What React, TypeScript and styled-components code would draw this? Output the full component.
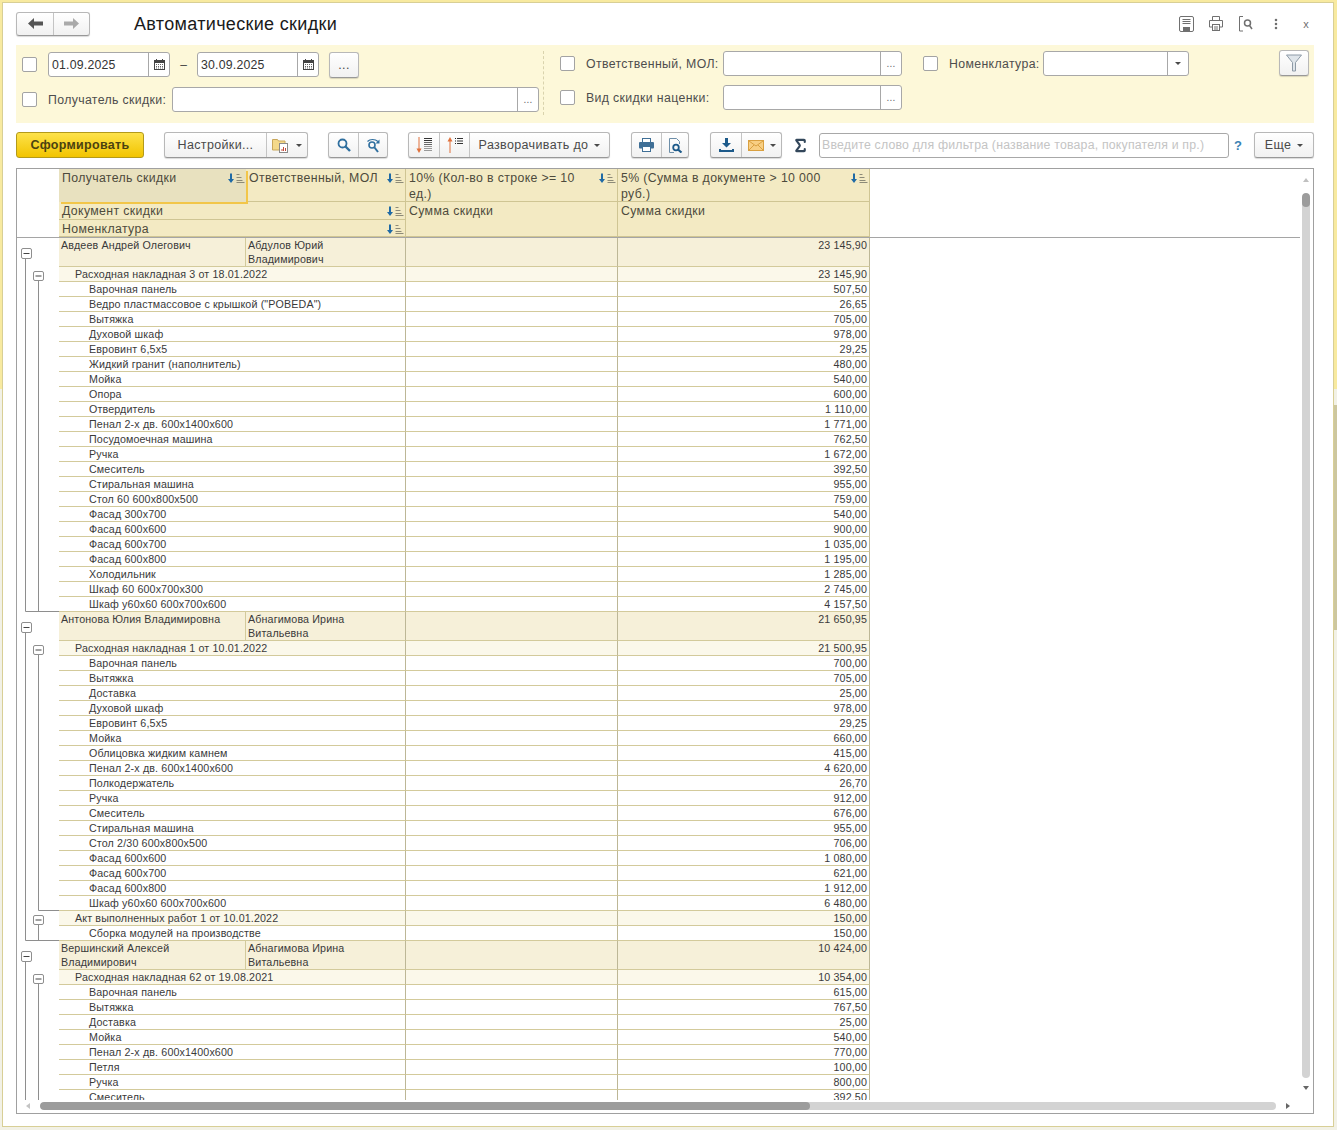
import React from 'react';
import styled, { createGlobalStyle } from 'styled-components';
import { MoreVertical, Sigma } from 'lucide-react';

type Item = [string, string];
type Doc = { title: string; sum: string; items: Item[] };
type Group = { name: string; mol: string; sum: string; docs: Doc[] };

const groups: Group[] = [
  {
    name: 'Авдеев Андрей Олегович',
    mol: 'Абдулов Юрий Владимирович',
    sum: '23 145,90',
    docs: [
      {
        title: 'Расходная накладная 3 от 18.01.2022',
        sum: '23 145,90',
        items: [
          ['Варочная панель', '507,50'],
          ['Ведро пластмассовое с крышкой ("POBEDA")', '26,65'],
          ['Вытяжка', '705,00'],
          ['Духовой шкаф', '978,00'],
          ['Евровинт 6,5х5', '29,25'],
          ['Жидкий гранит (наполнитель)', '480,00'],
          ['Мойка', '540,00'],
          ['Опора', '600,00'],
          ['Отвердитель', '1 110,00'],
          ['Пенал 2-х дв. 600х1400х600', '1 771,00'],
          ['Посудомоечная машина', '762,50'],
          ['Ручка', '1 672,00'],
          ['Смеситель', '392,50'],
          ['Стиральная машина', '955,00'],
          ['Стол 60 600х800х500', '759,00'],
          ['Фасад 300х700', '540,00'],
          ['Фасад 600х600', '900,00'],
          ['Фасад 600х700', '1 035,00'],
          ['Фасад 600х800', '1 195,00'],
          ['Холодильник', '1 285,00'],
          ['Шкаф 60 600х700х300', '2 745,00'],
          ['Шкаф у60х60 600х700х600', '4 157,50'],
        ],
      },
    ],
  },
  {
    name: 'Антонова Юлия Владимировна',
    mol: 'Абнагимова Ирина Витальевна',
    sum: '21 650,95',
    docs: [
      {
        title: 'Расходная накладная 1 от 10.01.2022',
        sum: '21 500,95',
        items: [
          ['Варочная панель', '700,00'],
          ['Вытяжка', '705,00'],
          ['Доставка', '25,00'],
          ['Духовой шкаф', '978,00'],
          ['Евровинт 6,5х5', '29,25'],
          ['Мойка', '660,00'],
          ['Облицовка жидким камнем', '415,00'],
          ['Пенал 2-х дв. 600х1400х600', '4 620,00'],
          ['Полкодержатель', '26,70'],
          ['Ручка', '912,00'],
          ['Смеситель', '676,00'],
          ['Стиральная машина', '955,00'],
          ['Стол 2/30 600х800х500', '706,00'],
          ['Фасад 600х600', '1 080,00'],
          ['Фасад 600х700', '621,00'],
          ['Фасад 600х800', '1 912,00'],
          ['Шкаф у60х60 600х700х600', '6 480,00'],
        ],
      },
      {
        title: 'Акт выполненных работ 1 от 10.01.2022',
        sum: '150,00',
        items: [['Сборка модулей на производстве', '150,00']],
      },
    ],
  },
  {
    name: 'Вершинский Алексей Владимирович',
    mol: 'Абнагимова Ирина Витальевна',
    sum: '10 424,00',
    docs: [
      {
        title: 'Расходная накладная 62 от 19.08.2021',
        sum: '10 354,00',
        items: [
          ['Варочная панель', '615,00'],
          ['Вытяжка', '767,50'],
          ['Доставка', '25,00'],
          ['Мойка', '540,00'],
          ['Пенал 2-х дв. 600х1400х600', '770,00'],
          ['Петля', '100,00'],
          ['Ручка', '800,00'],
          ['Смеситель', '392,50'],
          ['Стол 60 600х800х500', '759,00'],
        ],
      },
    ],
  },
];

const GlobalStyle = createGlobalStyle`
  html, body { margin: 0; padding: 0; }
  body {
    background: #fff;
    font-family: "Liberation Sans", Arial, sans-serif;
  }
`;

const Desktop = styled.div`
  width: 1337px;
  height: 1130px;
  box-sizing: border-box;
  padding: 3px 4px 4px 3px;
  background:
    linear-gradient(#cdc79f, #cdc79f) right 0 top 405px / 3px 225px no-repeat,
    linear-gradient(to bottom, #f8eaa0 0, #f8eaa0 389px, #f2f1e6 389px);
  overflow: hidden;
`;

const Window = styled.div`
  height: 100%;
  box-sizing: border-box;
  background: #fff;
  box-shadow: 0 0 0 1px #d8cf96;
  padding: 8px 19px 12px 13px;
  display: flex;
  flex-direction: column;
`;

const TitleBar = styled.div`
  height: 25px;
  display: flex;
  align-items: center;
  margin-bottom: 9px;
`;

const Title = styled.h1`
  margin: 1px 0 0 44px;
  font-size: 18px;
  font-weight: 400;
  color: #1a1a1a;
  letter-spacing: 0.33px;
`;

const TitleIcons = styled.div`
  margin-left: auto;
  margin-right: -7px;
  display: flex;
  align-items: center;
  color: #6f6f6f;
`;

const TitleIcon = styled.span`
  width: 30px;
  height: 18px;
  display: flex;
  align-items: center;
  justify-content: center;
  font-size: 11px;
`;

const ButtonGroup = styled.div<{ $gap?: number; $h?: number }>`
  display: inline-flex;
  height: ${(p) => p.$h ?? 26}px;
  box-sizing: border-box;
  border: 1px solid #b8b8b8;
  border-bottom-color: #989898;
  border-radius: 3px;
  background: linear-gradient(to bottom, #ffffff, #f1f1f1);
  box-shadow: 0 1px 1px rgba(0, 0, 0, 0.15);
  margin-left: ${(p) => p.$gap ?? 0}px;
  flex: none;
`;

const IconButton = styled.div<{ $w: number; $divider?: boolean }>`
  width: ${(p) => p.$w}px;
  display: flex;
  align-items: center;
  justify-content: center;
  gap: 6px;
  box-sizing: border-box;
  font-size: 12.5px;
  letter-spacing: 0.35px;
  color: #4a4a4a;
  border-left: ${(p) => (p.$divider ? '1px solid #c4c4c4' : 'none')};
`;

const Caret = styled.span`
  width: 0;
  height: 0;
  border-left: 3px solid transparent;
  border-right: 3px solid transparent;
  border-top: 3px solid #4a4a4a;
  flex: none;
`;

const FilterPanel = styled.div`
  height: 78px;
  box-sizing: border-box;
  background: #fdf8d9;
  display: flex;
  margin-bottom: 9px;
`;

const FilterLeft = styled.div`
  width: 527px;
  padding: 7px 0 0 6px;
  box-sizing: border-box;
  display: flex;
  flex-direction: column;
  gap: 10px;
`;

const FilterRight = styled.div`
  flex: 1;
  margin: 6px 0 8px;
  padding: 0 0 0 16px;
  border-left: 1px dashed #d9d3ad;
  display: flex;
  flex-direction: column;
  gap: 9px;
  position: relative;
`;

const FilterRow = styled.div`
  height: 25px;
  display: flex;
  align-items: center;
`;

const Check = styled.span<{ $ml?: number }>`
  width: 15px;
  height: 15px;
  flex: none;
  box-sizing: border-box;
  background: #fff;
  border: 1px solid #a3a3a3;
  border-radius: 2px;
  margin-right: 11px;
  margin-left: ${(p) => p.$ml ?? 0}px;
`;

const FieldLabel = styled.span<{ $w: number }>`
  width: ${(p) => p.$w}px;
  flex: none;
  font-size: 12.3px;
  color: #4d4d4d;
  letter-spacing: 0.36px;
  white-space: nowrap;
`;

const Field = styled.div<{ $w: number }>`
  width: ${(p) => p.$w}px;
  height: 25px;
  box-sizing: border-box;
  flex: none;
  background: #fff;
  border: 1px solid #a8a8a8;
  border-radius: 3px;
  display: flex;
  align-items: center;
  font-size: 12.3px;
  color: #333;
  letter-spacing: 0.2px;
`;

const FieldText = styled.span`
  flex: 1;
  padding-left: 3px;
`;

const FieldAddon = styled.span`
  width: 21px;
  height: 100%;
  box-sizing: border-box;
  border-left: 1px solid #a8a8a8;
  display: flex;
  align-items: center;
  justify-content: center;
  color: #666;
  font-size: 10px;
  flex: none;
`;

const Dash = styled.span`
  width: 27px;
  flex: none;
  text-align: center;
  font-size: 12px;
  color: #444;
`;

const FilterSwitch = styled(ButtonGroup)`
  position: absolute;
  top: -1px;
  right: 5px;
  width: 30px;
  align-items: center;
  justify-content: center;
`;

const Toolbar = styled.div`
  height: 26px;
  display: flex;
  align-items: center;
  margin-bottom: 10px;
`;

const GenerateButton = styled.div`
  width: 128px;
  height: 26px;
  box-sizing: border-box;
  flex: none;
  border: 1px solid #b39a1a;
  border-radius: 3px;
  background: linear-gradient(to bottom, #fde24a, #f2c400);
  display: flex;
  align-items: center;
  justify-content: center;
  font-size: 12.5px;
  font-weight: 700;
  letter-spacing: 0.3px;
  color: #4a4210;
`;

const SumIcon = styled(Sigma)`
  margin-left: 10px;
  flex: none;
  color: #33475b;
`;

const SearchInput = styled.div`
  width: 410px;
  height: 25px;
  box-sizing: border-box;
  margin-left: 10px;
  padding-left: 2px;
  border: 1px solid #a8a8a8;
  border-radius: 3px;
  display: flex;
  align-items: center;
  font-size: 12.3px;
  color: #c4c4c4;
  letter-spacing: 0.2px;
  white-space: nowrap;
  flex: none;
`;

const Help = styled.span`
  width: 18px;
  margin-right: 7px;
  text-align: center;
  flex: none;
  font-size: 13px;
  font-weight: 700;
  color: #3b82b4;
`;

const Report = styled.div`
  flex: 1;
  min-height: 0;
  box-sizing: border-box;
  border: 1px solid #a0a0a0;
  position: relative;
  overflow: hidden;
`;

const Viewport = styled.div`
  width: 1283px;
  height: 931px;
  overflow: hidden;
`;

const columns = '42px 187px 160px 212px 252px';

const Head = styled.div`
  display: grid;
  grid-template-columns: ${columns};
  grid-template-rows: 33px 18px 17px;
  width: 1283px;
  height: 69px;
  box-sizing: border-box;
  border-bottom: 1px solid #a5a5a5;
`;

const HeadCell = styled.div<{ $col: string; $row: string; $active?: boolean }>`
  grid-column: ${(p) => p.$col};
  grid-row: ${(p) => p.$row};
  position: relative;
  z-index: ${(p) => (p.$active ? 1 : 0)};
  box-sizing: border-box;
  padding: 1px 20px 0 3px;
  background: ${(p) => (p.$active ? '#e8e1bf' : '#f3eac3')};
  border-right: ${(p) => (p.$active ? 'none' : '1px solid #cfc593')};
  border-bottom: ${(p) => (p.$active ? 'none' : '1px solid #cfc593')};
  box-shadow: ${(p) => (p.$active ? '2px 2px 0 #f2c649' : 'none')};
  font-size: 12.3px;
  line-height: 16px;
  letter-spacing: 0.36px;
  color: #4d4a3c;
`;

const SortMark = styled.svg`
  position: absolute;
  top: 4px;
  right: 1px;
  width: 18px;
  height: 11px;
`;

const Row = styled.div<{ $h: number; $bg: string }>`
  display: grid;
  grid-template-columns: ${columns};
  height: ${(p) => p.$h}px;
  > div:not(:first-child) {
    background: ${(p) => p.$bg};
  }
`;

const Gutter = styled.div`
  background: #fff;
`;

const GutterSvg = styled.svg`
  display: block;
`;

const Cell = styled.div<{ $span?: number; $indent?: number; $wrap?: boolean }>`
  grid-column: span ${(p) => p.$span ?? 1};
  box-sizing: border-box;
  padding: 0 ${(p) => (p.$wrap ? 8 : 2)}px 0 ${(p) => p.$indent ?? 2}px;
  border-right: 1px solid #bdb796;
  border-bottom: 1px solid #d3ca9b;
  font-size: 10.7px;
  line-height: 14px;
  letter-spacing: 0.14px;
  color: #3a3a3a;
  white-space: ${(p) => (p.$wrap ? 'normal' : 'nowrap')};
  overflow: hidden;
`;

const NameCell = styled(Cell)`
  border-right-color: #d3ca9b;
`;

const AmountCell = styled(Cell)`
  text-align: right;
`;

const VTrack = styled.div`
  position: absolute;
  top: 24px;
  right: 3px;
  width: 8px;
  height: 885px;
  border-radius: 4px;
  background: #d3d3d3;
  overflow: hidden;
`;

const VThumb = styled.div`
  height: 14px;
  border-radius: 4px;
  background: #9c9c9c;
`;

const HTrack = styled.div`
  position: absolute;
  left: 23px;
  bottom: 3px;
  width: 1236px;
  height: 8px;
  border-radius: 4px;
  background: #d3d3d3;
  overflow: hidden;
`;

const HThumb = styled.div`
  width: 770px;
  height: 100%;
  border-radius: 4px;
  background: #9c9c9c;
`;

const Arrow = styled.span<{ $dir: 'up' | 'down' | 'left' | 'right'; $x: number; $y: number }>`
  position: absolute;
  left: ${(p) => p.$x}px;
  top: ${(p) => p.$y}px;
  width: 0;
  height: 0;
  border: 3px solid transparent;
  ${(p) =>
    p.$dir === 'up'
      ? 'border-bottom: 4px solid #c0c0c0; border-top: 0;'
      : p.$dir === 'down'
        ? 'border-top: 4px solid #666; border-bottom: 0;'
        : p.$dir === 'left'
          ? 'border-right: 4px solid #c4c4c4; border-left: 0;'
          : 'border-left: 4px solid #666; border-right: 0;'}
`;

const SortIcon = () => (
  <SortMark viewBox="0 0 18 11">
    <path d="M4 0.5v6" stroke="#1f6aa5" strokeWidth="2" />
    <path d="M1 6h6L4 10z" fill="#1f6aa5" />
    <path d="M9.5 1.5h3M9.5 4.5h5M9.5 7.5h6M9.5 9.5h8" stroke="#8c8a78" strokeWidth="1" fill="none" />
  </SortMark>
);

const NavArrow = ({ color, back }: { color: string; back?: boolean }) => (
  <svg width="15" height="11" viewBox="0 0 15 11">
    <path
      d={back ? 'M0 5.5 6 0v3.5h9v4H6V11z' : 'M15 5.5 9 0v3.5H0v4h9V11z'}
      fill={color}
    />
  </svg>
);

const SaveIcon = () => (
  <svg width="15" height="16" viewBox="0 0 15 16" fill="none" stroke="#707070">
    <rect x="0.5" y="0.5" width="14" height="15" rx="1.5" />
    <path d="M3.5 3.5h8M3.5 5.5h8M3.5 7.5h8" />
    <rect x="4" y="11" width="7" height="4" fill="#707070" stroke="none" />
  </svg>
);

const PrinterOutline = () => (
  <svg width="16" height="17" viewBox="0 0 16 17" fill="none" stroke="#707070">
    <path d="M4.5 5V1.5h7V5" />
    <path d="M4 12H1.5V5.5h13V12H12" />
    <rect x="4.5" y="9.5" width="7" height="6" fill="#fff" />
    <path d="M6 12h4M6 14h4" />
  </svg>
);

const PreviewOutline = () => (
  <svg width="16" height="17" viewBox="0 0 16 17" fill="none" stroke="#707070">
    <path d="M5 16H1.5V1.5H5" />
    <circle cx="9.5" cy="8" r="3" strokeWidth="1.5" />
    <path d="M11.5 10.5 14 14" strokeWidth="1.5" />
  </svg>
);

const CalendarIcon = () => (
  <svg width="11" height="11" viewBox="0 0 11 11">
    <path d="M2.5 0v2M8.5 0v2" stroke="#444" />
    <rect x="0.5" y="1.5" width="10" height="9" fill="#fff" stroke="#444" />
    <rect x="1" y="2" width="9" height="2" fill="#444" />
    <path d="M2 5.5h7M2 7.5h7M2 9h7" stroke="#666" strokeDasharray="1 1" />
  </svg>
);

const FunnelIcon = () => (
  <svg width="16" height="18" viewBox="0 0 16 18">
    <path d="M0.5 1h15L9.5 8.5V17h-3V8.5z" fill="#dfe5ea" stroke="#8d9aa6" />
  </svg>
);

const ListOrderIcon = ({ up }: { up?: boolean }) => (
  <svg width="18" height="16" viewBox="0 0 18 16">
    {up ? (
      <>
        <path d="M4 3v13" stroke="#e0713c" strokeWidth="1" />
        <path d="M1.5 4.5 4 0l2.5 4.5z" fill="#e0713c" />
        <path d="M9 1.5h1M9 4h1M9 6.5h1" stroke="#222" />
        <path d="M11 1.5h6M11 4h6M11 6.5h6" stroke="#333" />
      </>
    ) : (
      <>
        <path d="M4 0v13" stroke="#e0713c" strokeWidth="1" />
        <path d="M1.5 11.5 4 16l2.5-4.5z" fill="#e0713c" />
        <path d="M9 1.5h8M9 3.5h8" stroke="#333" />
        <path d="M9 5.5h8M9 7.5h8" stroke="#666" />
        <path d="M9 9.5h8M9 11.5h8M9 13.5h8" stroke="#999" />
      </>
    )}
  </svg>
);

const ReportIcon = () => (
  <svg width="18" height="16" viewBox="0 0 18 16">
    <path d="M0.5 2.5h5l1 1.5h6.5v9H0.5z" fill="#f4d98a" stroke="#c9a75a" />
    <rect x="7.5" y="6.5" width="8" height="9" fill="#fff" stroke="#8a8a8a" />
    <path d="M10 14v-2M11.5 14v-4M13.5 14v-3" stroke="#c04a3a" />
  </svg>
);

const SearchBlue = () => (
  <svg width="14" height="14" viewBox="0 0 14 14" fill="none" stroke="#2f6f9f">
    <circle cx="5.5" cy="5.5" r="4" strokeWidth="1.8" />
    <path d="M8.5 8.5 13 13" strokeWidth="2.4" />
  </svg>
);

const SearchNextBlue = () => (
  <svg width="15" height="15" viewBox="0 0 15 15" fill="none" stroke="#2f6f9f">
    <circle cx="6" cy="7" r="3" strokeWidth="1.6" />
    <path d="M8.5 9.5 12 14" strokeWidth="2" />
    <path d="M1.5 3.5C4 0.8 9 0.8 12 3.5" strokeWidth="1.2" />
    <path d="M13.5 1.5v4h-4z" fill="#2f6f9f" stroke="none" />
  </svg>
);

const PrinterBlue = () => (
  <svg width="15" height="14" viewBox="0 0 15 14">
    <rect x="3.5" y="0.5" width="8" height="4" fill="#fff" stroke="#3f6f96" />
    <rect x="0" y="4" width="15" height="6.5" rx="1" fill="#3f6f96" />
    <rect x="3.5" y="8.5" width="8" height="5" fill="#fff" stroke="#3f6f96" />
  </svg>
);

const PreviewBlue = () => (
  <svg width="15" height="15" viewBox="0 0 15 15" fill="none">
    <path d="M1.5 14.5v-14h7l3 3V6" stroke="#6d8ea8" />
    <path d="M1.5 14.5H6" stroke="#6d8ea8" />
    <circle cx="8" cy="9.5" r="2.8" stroke="#1d5a8a" strokeWidth="1.8" />
    <path d="M10 11.5 13.5 14.5" stroke="#1d5a8a" strokeWidth="2.2" />
  </svg>
);

const DownloadBlue = () => (
  <svg width="15" height="14" viewBox="0 0 15 14">
    <path d="M6 0h3v5h3l-4.500 4.500L3 5h3z" fill="#1d5a8a" />
    <path d="M0 11h2v1h11v-1h2v3H0z" fill="#1d5a8a" />
  </svg>
);

const MailIcon = () => (
  <svg width="16" height="11" viewBox="0 0 16 11">
    <rect x="0.5" y="0.5" width="15" height="10" fill="#f8cf83" stroke="#d9a040" />
    <path d="M1 1l7 5 7-5M1 10l5-5M15 10l-5-5" fill="none" stroke="#d9a040" />
  </svg>
);

// tree connectors in the left gutter of a row
const TreeLines = ({
  kind,
  h,
  endDoc,
  endGroup,
}: {
  kind: 'group' | 'doc' | 'item';
  h: number;
  endDoc?: boolean;
  endGroup?: boolean;
}) => {
  const endY = h - 0.5;
  return (
    <GutterSvg width="42" height={h}>
      {kind === 'group' && (
        <>
          <path d={`M8.5 20v${h - 20}`} stroke="#8e8e8e" />
          <rect x="4.5" y="10.500" width="10" height="10" rx="1.5" fill="#fff" stroke="#8e8e8e" />
          <path d="M6.500 15.500h6" stroke="#444" />
        </>
      )}
      {kind === 'doc' && (
        <>
          <path d={`M8.5 0v${h}`} stroke="#8e8e8e" />
          <path d={`M21.5 13v${h - 13}`} stroke="#8e8e8e" />
          <rect x="16.5" y="4.5" width="10" height="9" rx="1.5" fill="#fff" stroke="#8e8e8e" />
          <path d="M18.500 9h6" stroke="#444" />
        </>
      )}
      {kind === 'item' && (
        <>
          <path d={endGroup ? `M8.5 0V${endY}H42` : `M8.5 0v${h}`} stroke="#8e8e8e" fill="none" />
          <path d={endDoc ? `M21.5 0V${endY}H42` : `M21.5 0v${h}`} stroke="#8e8e8e" fill="none" />
        </>
      )}
    </GutterSvg>
  );
};

const App: React.FC = () => {
  return (
    <>
      <GlobalStyle />
      <Desktop>
        <Window>
          <TitleBar>
            <ButtonGroup $h={24}>
              <IconButton $w={36}>
                <NavArrow color="#555" back />
              </IconButton>
              <IconButton $w={36} $divider>
                <NavArrow color="#aaa" />
              </IconButton>
            </ButtonGroup>
            <Title>Автоматические скидки</Title>
            <TitleIcons>
              <TitleIcon>
                <SaveIcon />
              </TitleIcon>
              <TitleIcon>
                <PrinterOutline />
              </TitleIcon>
              <TitleIcon>
                <PreviewOutline />
              </TitleIcon>
              <TitleIcon>
                <MoreVertical size={14} strokeWidth={2.4} />
              </TitleIcon>
              <TitleIcon>x</TitleIcon>
            </TitleIcons>
          </TitleBar>

          <FilterPanel>
            <FilterLeft>
              <FilterRow>
                <Check />
                <Field $w={122}>
                  <FieldText>01.09.2025</FieldText>
                  <FieldAddon>
                    <CalendarIcon />
                  </FieldAddon>
                </Field>
                <Dash>–</Dash>
                <Field $w={122}>
                  <FieldText>30.09.2025</FieldText>
                  <FieldAddon>
                    <CalendarIcon />
                  </FieldAddon>
                </Field>
                <ButtonGroup $gap={10}>
                  <IconButton $w={28}>...</IconButton>
                </ButtonGroup>
              </FilterRow>
              <FilterRow>
                <Check />
                <FieldLabel $w={124}>Получатель скидки:</FieldLabel>
                <Field $w={367}>
                  <FieldText />
                  <FieldAddon>...</FieldAddon>
                </Field>
              </FilterRow>
            </FilterLeft>
            <FilterRight>
              <FilterRow>
                <Check />
                <FieldLabel $w={137}>Ответственный, МОЛ:</FieldLabel>
                <Field $w={179}>
                  <FieldText />
                  <FieldAddon>...</FieldAddon>
                </Field>
                <Check $ml={21} />
                <FieldLabel $w={94}>Номенклатура:</FieldLabel>
                <Field $w={146}>
                  <FieldText />
                  <FieldAddon>
                    <Caret />
                  </FieldAddon>
                </Field>
              </FilterRow>
              <FilterRow>
                <Check />
                <FieldLabel $w={137}>Вид скидки наценки:</FieldLabel>
                <Field $w={179}>
                  <FieldText />
                  <FieldAddon>...</FieldAddon>
                </Field>
              </FilterRow>
              <FilterSwitch>
                <FunnelIcon />
              </FilterSwitch>
            </FilterRight>
          </FilterPanel>

          <Toolbar>
            <GenerateButton>Сформировать</GenerateButton>
            <ButtonGroup $gap={20}>
              <IconButton $w={101}>Настройки...</IconButton>
              <IconButton $w={41} $divider>
                <ReportIcon />
                <Caret />
              </IconButton>
            </ButtonGroup>
            <ButtonGroup $gap={20}>
              <IconButton $w={29}>
                <SearchBlue />
              </IconButton>
              <IconButton $w={29} $divider>
                <SearchNextBlue />
              </IconButton>
            </ButtonGroup>
            <ButtonGroup $gap={20}>
              <IconButton $w={30}>
                <ListOrderIcon />
              </IconButton>
              <IconButton $w={30} $divider>
                <ListOrderIcon up />
              </IconButton>
              <IconButton $w={140} $divider>
                Разворачивать до
                <Caret />
              </IconButton>
            </ButtonGroup>
            <ButtonGroup $gap={21}>
              <IconButton $w={29}>
                <PrinterBlue />
              </IconButton>
              <IconButton $w={27} $divider>
                <PreviewBlue />
              </IconButton>
            </ButtonGroup>
            <ButtonGroup $gap={21}>
              <IconButton $w={30}>
                <DownloadBlue />
              </IconButton>
              <IconButton $w={40} $divider>
                <MailIcon />
                <Caret />
              </IconButton>
            </ButtonGroup>
            <SumIcon size={17} strokeWidth={3} />
            <SearchInput>Введите слово для фильтра (название товара, покупателя и пр.)</SearchInput>
            <Help>?</Help>
            <ButtonGroup>
              <IconButton $w={58}>
                Еще
                <Caret />
              </IconButton>
            </ButtonGroup>
          </Toolbar>

          <Report>
            <Viewport>
              <Head>
                <HeadCell $col="2" $row="1" $active>
                  Получатель скидки
                  <SortIcon />
                </HeadCell>
                <HeadCell $col="3" $row="1">
                  Ответственный, МОЛ
                  <SortIcon />
                </HeadCell>
                <HeadCell $col="4" $row="1">
                  10% (Кол-во в строке &gt;= 10 ед.)
                  <SortIcon />
                </HeadCell>
                <HeadCell $col="5" $row="1">
                  5% (Сумма в документе &gt; 10 000 руб.)
                  <SortIcon />
                </HeadCell>
                <HeadCell $col="2 / span 2" $row="2">
                  Документ скидки
                  <SortIcon />
                </HeadCell>
                <HeadCell $col="2 / span 2" $row="3">
                  Номенклатура
                  <SortIcon />
                </HeadCell>
                <HeadCell $col="4" $row="2 / span 2">
                  Сумма скидки
                </HeadCell>
                <HeadCell $col="5" $row="2 / span 2">
                  Сумма скидки
                </HeadCell>
              </Head>
              {groups.map((group) => (
                <React.Fragment key={group.name}>
                  <Row $h={29} $bg="#f6f0d9">
                    <Gutter>
                      <TreeLines kind="group" h={29} />
                    </Gutter>
                    <NameCell $wrap>{group.name}</NameCell>
                    <Cell $wrap>{group.mol}</Cell>
                    <Cell />
                    <AmountCell>{group.sum}</AmountCell>
                  </Row>
                  {group.docs.map((doc, d) => (
                    <React.Fragment key={doc.title}>
                      <Row $h={15} $bg="#fbf8ea">
                        <Gutter>
                          <TreeLines kind="doc" h={15} />
                        </Gutter>
                        <Cell $span={2} $indent={16}>
                          {doc.title}
                        </Cell>
                        <Cell />
                        <AmountCell>{doc.sum}</AmountCell>
                      </Row>
                      {doc.items.map(([name, sum], i) => {
                        const endDoc = i === doc.items.length - 1;
                        return (
                          <Row key={name + i} $h={15} $bg="#fff">
                            <Gutter>
                              <TreeLines
                                kind="item"
                                h={15}
                                endDoc={endDoc}
                                endGroup={endDoc && d === group.docs.length - 1}
                              />
                            </Gutter>
                            <Cell $span={2} $indent={30}>
                              {name}
                            </Cell>
                            <Cell />
                            <AmountCell>{sum}</AmountCell>
                          </Row>
                        );
                      })}
                    </React.Fragment>
                  ))}
                </React.Fragment>
              ))}
            </Viewport>
            <Arrow $dir="up" $x={1286} $y={9} />
            <VTrack>
              <VThumb />
            </VTrack>
            <Arrow $dir="down" $x={1286} $y={917} />
            <Arrow $dir="left" $x={9} $y={934} />
            <HTrack>
              <HThumb />
            </HTrack>
            <Arrow $dir="right" $x={1269} $y={934} />
          </Report>
        </Window>
      </Desktop>
    </>
  );
};

export default App;
